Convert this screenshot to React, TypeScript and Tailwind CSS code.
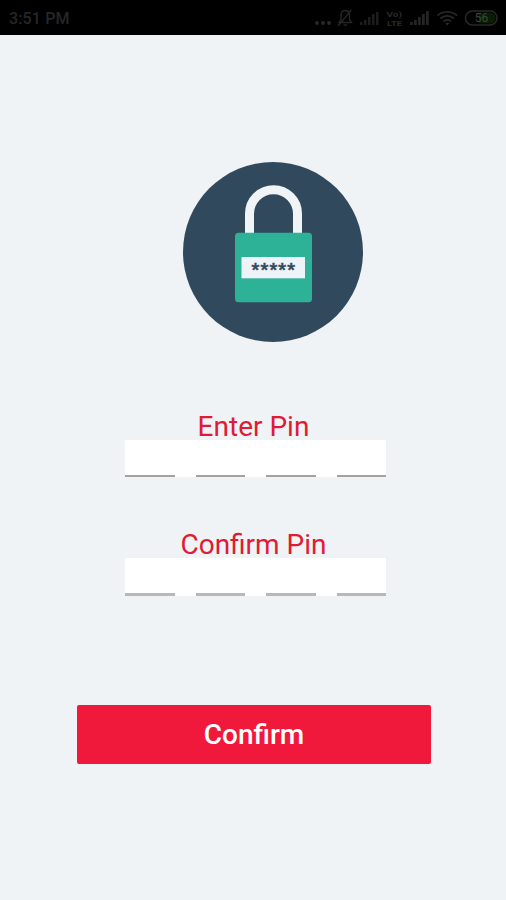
const PIN_LENGTH = 4;

function StatusBar() {
  return (
    <header className="flex h-[35px] shrink-0 items-center justify-between bg-black pr-2 pl-[9px] text-[#262626]">
      <span className="pt-0.5 text-[16px] leading-5 font-medium tracking-[0.15px]">3:51 PM</span>
      <svg className="h-[35px] w-[186px]" viewBox="312 0 186 35" fill="none">
        <g fill="#292929">
          <circle cx="317" cy="23" r="1.9" />
          <circle cx="323" cy="23" r="1.9" />
          <circle cx="329" cy="23" r="1.9" />
        </g>
        <g stroke="#252525" strokeWidth="1.4" strokeLinecap="round">
          <path d="M339 22.5h12.5l-2-3v-4c0-3-1.7-5-4.3-5s-4.2 2-4.2 5v4zM344 25h2.5M338.5 25.5 351 10.5" />
        </g>
        <g fill="#1d1d1d">
          <path d="M360 22h2.5v3H360zM364 20h2.5v5H364zM368 17h2.5v8H368zM372 14h2.5v11H372zM376 12h2.5v13H376z" />
        </g>
        <g fill="#2a2a2a" fontSize="7.5" fontWeight="700">
          <text x="386.5" y="16.5" textLength="15.5" lengthAdjust="spacingAndGlyphs">Vo)</text>
          <text x="387" y="25.5" textLength="15" lengthAdjust="spacingAndGlyphs">LTE</text>
        </g>
        <g fill="#242424">
          <path d="M410 22h2.8v3H410zM414 20h2.8v5H414zM418 17h2.8v8H418zM422 14h2.8v11H422zM426 11h2.8v14H426z" />
        </g>
        <g stroke="#292929" strokeWidth="1.7">
          <path d="M437.5 15.5c6-5 13.5-5 19.5 0M440.5 18.5c4-3.5 9.5-3.5 13.5 0M443.5 21.5c2.3-2 5.2-2 7.5 0" />
        </g>
        <path d="m447.3 25.5-2-2.3c1.2-1 2.8-1 4 0z" fill="#292929" />
        <rect x="465.5" y="11" width="31.5" height="14" rx="7" stroke="#292929" strokeWidth="1.5" />
        <path d="M479 12.5h11a5.5 5.5 0 0 1 0 11h-11z" fill="#0b1d06" />
        <text x="481.5" y="22" textAnchor="middle" fontSize="12" fontWeight="400" fill="#3a4a35">
          56
        </text>
      </svg>
    </header>
  );
}

function LockBadge() {
  return (
    <svg className="ml-[183px] size-[180px]" viewBox="0 0 180 180" fill="none">
      <circle cx="90" cy="90" r="90" fill="#31495d" />
      <path d="M66.5 76V51.7a24 24 0 0 1 48 0V76" stroke="#f0f4f7" strokeWidth="9" />
      <rect x="52" y="70.7" width="77" height="69.5" rx="3.5" fill="#2db297" />
      <rect x="58.5" y="95" width="63.5" height="21.3" fill="#edf3f6" />
      <text
        x="72.3 81.3 90.3 99.2 108"
        y="113.3"
        textAnchor="middle"
        fontSize="17"
        fontWeight="700"
        fill="#31495d"
        stroke="#31495d"
        strokeWidth="0.5"
      >
        *****
      </text>
    </svg>
  );
}

function PinField({ label, box, line }: { label: string; box: string; line: string }) {
  return (
    <div className="flex flex-col items-center">
      <span className="ml-px h-[27px] text-[28px] leading-[27px] text-[#e01b34]">{label}</span>
      <div className={`ml-[5px] flex w-[261px] items-end justify-between bg-white ${box}`}>
        {Array.from({ length: PIN_LENGTH }, (_, i) => (
          <span key={i} className={`w-[49.5px] ${line}`} />
        ))}
      </div>
    </div>
  );
}

export default function App() {
  return (
    <div className="flex h-[900px] w-[506px] flex-col overflow-hidden bg-[#f0f3f5] font-[Roboto,sans-serif]">
      <StatusBar />
      <main className="flex flex-col pt-[127px]">
        <LockBadge />
        <div className="mt-[71px] flex flex-col gap-[54px]">
          <PinField label="Enter Pin" box="h-[37px]" line="h-[2px] bg-[#a2a2a2]" />
          <PinField label="Confirm Pin" box="h-[38px]" line="h-[3px] bg-[#b8b8b8]" />
        </div>
        <button className="mt-[109px] ml-[77px] h-[59px] w-[354px] rounded-[2px] bg-[#f0193c] pt-px text-[28px] leading-none font-medium text-white">
          Confirm
        </button>
      </main>
    </div>
  );
}
